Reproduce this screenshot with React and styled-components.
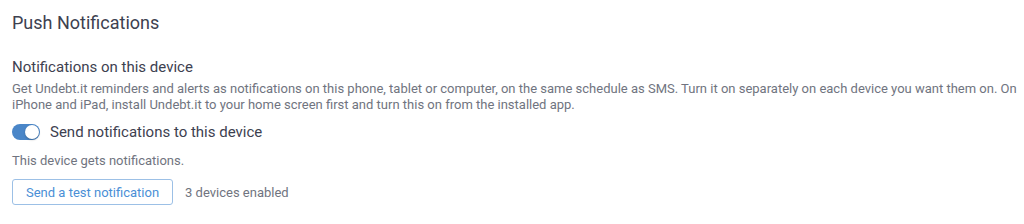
import React, { useState } from "react";
import styled, { createGlobalStyle } from "styled-components";

const GlobalStyle = createGlobalStyle`
    body {
        margin: 0;
        background: #fff;
        font-family: Roboto, "Liberation Sans", sans-serif;
    }
`

const Page = styled.div`
    padding: 11px 4px 10px 12px;
    color: #3d4150;
`
const Title = styled.h2`
    margin: 0 0 22px;
    font-size: 18px;
    font-weight: 400;
    line-height: 24px;
    color: #3d4150;
`
const SubTitle = styled.h3`
    margin: 0 0 4px;
    font-size: 15px;
    font-weight: 400;
    line-height: 20px;
`
const Text = styled.p`
    margin: 0;
    font-size: 13px;
    line-height: 16px;
    color: #707480;
`
const ToggleRow = styled.label`
    display: flex;
    align-items: center;
    gap: 10px;
    margin: 9px 0 0;
    font-size: 15px;
    line-height: 20px;
    color: #3d4150;
    cursor: pointer;
`
const Track = styled.span`
    position: relative;
    width: 28px;
    height: 16px;
    border-radius: 8px;
    background: ${p => (p.$on ? "#4a86c8" : "#c9ccd3")};
    flex-shrink: 0;
`
const Knob = styled.span`
    position: absolute;
    top: 1px;
    left: ${p => (p.$on ? "13px" : "1px")};
    width: 14px;
    height: 14px;
    border-radius: 50%;
    background: #fff;
    box-shadow: 0 1px 2px rgba(0, 0, 0, 0.25);
`
const Status = styled(Text)`
    margin-top: 11px;
`
const Actions = styled.div`
    display: flex;
    align-items: center;
    gap: 12px;
    margin-top: 10px;
`
const Button = styled.button`
    height: 26px;
    padding: 0 13px;
    border: 1px solid #9cc0e6;
    border-radius: 3px;
    background: #fff;
    color: #4a8fd6;
    font-family: inherit;
    font-size: 13px;
    cursor: pointer;
`
const Count = styled.span`
    font-size: 13px;
    color: #707480;
`

const App = () => {
    const [on, setOn] = useState(true)
    return (
        <Page>
            <GlobalStyle />
            <Title>Push Notifications</Title>
            <SubTitle>Notifications on this device</SubTitle>
            <Text>
                Get Undebt.it reminders and alerts as notifications on this phone, tablet or computer, on the same schedule as SMS. Turn it on separately on each device you want them on. On iPhone and iPad, install Undebt.it to your home screen first and turn this on from the installed app.
            </Text>
            <ToggleRow onClick={() => setOn(!on)}>
                <Track $on={on}><Knob $on={on} /></Track>
                Send notifications to this device
            </ToggleRow>
            <Status>This device gets notifications.</Status>
            <Actions>
                <Button>Send a test notification</Button>
                <Count>3 devices enabled</Count>
            </Actions>
        </Page>
    )
}

export default App
